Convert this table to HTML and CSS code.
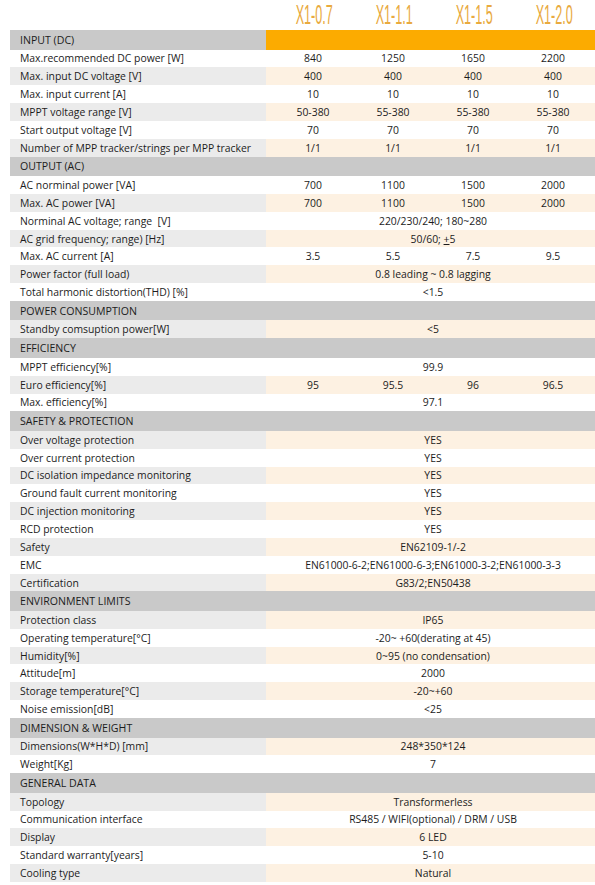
FILE: index.html
```html
<!DOCTYPE html>
<html lang="en">
<head>
    <meta charset="UTF-8">
    <meta name="viewport" content="width=device-width, initial-scale=1.0">
    <title>X1 Series Datasheet</title>
    <link rel="stylesheet" href="styles.css">
</head>
<body>

<table class="specs">
    <colgroup>
        <col class="col-label">
        <col class="col-first">
        <col class="col-mid">
        <col class="col-mid">
        <col class="col-last">
    </colgroup>
    <thead>
        <tr class="models">
            <th></th>
            <th><span>X1-0.7</span></th>
            <th><span>X1-1.1</span></th>
            <th><span>X1-1.5</span></th>
            <th><span>X1-2.0</span></th>
        </tr>
    </thead>
    <tbody>
        <tr class="section first-section"><th>INPUT (DC)</th><td colspan="4"></td></tr>
        <tr><th>Max.recommended DC power [W]</th><td>840</td><td>1250</td><td>1650</td><td>2200</td></tr>
        <tr class="alt"><th>Max. input DC voltage [V]</th><td>400</td><td>400</td><td>400</td><td>400</td></tr>
        <tr><th>Max. input current [A]</th><td>10</td><td>10</td><td>10</td><td>10</td></tr>
        <tr class="alt"><th>MPPT voltage range [V]</th><td>50-380</td><td>55-380</td><td>55-380</td><td>55-380</td></tr>
        <tr><th>Start output voltage [V]</th><td>70</td><td>70</td><td>70</td><td>70</td></tr>
        <tr class="alt"><th>Number of MPP tracker/strings per MPP tracker</th><td>1/1</td><td>1/1</td><td>1/1</td><td>1/1</td></tr>

        <tr class="section"><th>OUTPUT (AC)</th><td colspan="4"></td></tr>
        <tr><th>AC norminal power [VA]</th><td>700</td><td>1100</td><td>1500</td><td>2000</td></tr>
        <tr class="alt"><th>Max. AC power [VA]</th><td>700</td><td>1100</td><td>1500</td><td>2000</td></tr>
        <tr><th>Norminal AC voltage; range &nbsp;[V]</th><td colspan="4">220/230/240; 180~280</td></tr>
        <tr class="alt"><th>AC grid frequency; range) [Hz]</th><td colspan="4">50/60; <u>+</u>5</td></tr>
        <tr><th>Max. AC current [A]</th><td>3.5</td><td>5.5</td><td>7.5</td><td>9.5</td></tr>
        <tr class="alt"><th>Power factor (full load)</th><td colspan="4">0.8 leading ~ 0.8 lagging</td></tr>
        <tr><th>Total harmonic distortion(THD) [%]</th><td colspan="4">&lt;1.5</td></tr>

        <tr class="section"><th>POWER CONSUMPTION</th><td colspan="4"></td></tr>
        <tr class="alt"><th>Standby comsuption power[W]</th><td colspan="4">&lt;5</td></tr>

        <tr class="section"><th>EFFICIENCY</th><td colspan="4"></td></tr>
        <tr><th>MPPT efficiency[%]</th><td colspan="4">99.9</td></tr>
        <tr class="alt"><th>Euro efficiency[%]</th><td>95</td><td>95.5</td><td>96</td><td>96.5</td></tr>
        <tr><th>Max. efficiency[%]</th><td colspan="4">97.1</td></tr>

        <tr class="section"><th>SAFETY &amp; PROTECTION</th><td colspan="4"></td></tr>
        <tr class="alt"><th>Over voltage protection</th><td colspan="4">YES</td></tr>
        <tr><th>Over current protection</th><td colspan="4">YES</td></tr>
        <tr class="alt"><th>DC isolation impedance monitoring</th><td colspan="4">YES</td></tr>
        <tr><th>Ground fault current monitoring</th><td colspan="4">YES</td></tr>
        <tr class="alt"><th>DC injection monitoring</th><td colspan="4">YES</td></tr>
        <tr><th>RCD protection</th><td colspan="4">YES</td></tr>
        <tr class="alt"><th>Safety</th><td colspan="4">EN62109-1/-2</td></tr>
        <tr><th>EMC</th><td colspan="4">EN61000-6-2;EN61000-6-3;EN61000-3-2;EN61000-3-3</td></tr>
        <tr class="alt"><th>Certification</th><td colspan="4">G83/2;EN50438</td></tr>

        <tr class="section"><th>ENVIRONMENT LIMITS</th><td colspan="4"></td></tr>
        <tr class="alt"><th>Protection class</th><td colspan="4">IP65</td></tr>
        <tr><th>Operating temperature[°C]</th><td colspan="4">-20~ +60(derating at 45)</td></tr>
        <tr class="alt"><th>Humidity[%]</th><td colspan="4">0~95 (no condensation)</td></tr>
        <tr><th>Attitude[m]</th><td colspan="4">2000</td></tr>
        <tr class="alt"><th>Storage temperature[°C]</th><td colspan="4">-20~+60</td></tr>
        <tr><th>Noise emission[dB]</th><td colspan="4">&lt;25</td></tr>

        <tr class="section"><th>DIMENSION &amp; WEIGHT</th><td colspan="4"></td></tr>
        <tr class="alt"><th>Dimensions(W*H*D) [mm]</th><td colspan="4">248*350*124</td></tr>
        <tr><th>Weight[Kg]</th><td colspan="4">7</td></tr>

        <tr class="section"><th>GENERAL DATA</th><td colspan="4"></td></tr>
        <tr class="alt"><th>Topology</th><td colspan="4">Transformerless</td></tr>
        <tr><th>Communication interface</th><td colspan="4">RS485 / WIFI(optional) / DRM / USB</td></tr>
        <tr class="alt"><th>Display</th><td colspan="4">6 LED</td></tr>
        <tr><th>Standard warranty[years]</th><td colspan="4">5-10</td></tr>
        <tr class="alt"><th>Cooling type</th><td colspan="4">Natural</td></tr>
    </tbody>
</table>

</body>
</html>
```

FILE: styles.css
```css
body {
    font-family: "Open Sans", Arial, sans-serif;
    background-color: #ffffff;
    color: #1c1c1c;
    margin: 0;
    padding: 0;
}
.specs {
    width: 585px;
    margin-left: 10px;
    border-collapse: collapse;
    table-layout: fixed;
    font-size: 10.4px;
}
.col-label {
    width: 256px;
}
.col-first {
    width: 87px;
}
.col-mid {
    width: 80px;
}
.col-last {
    width: 82px;
}
.specs th, .specs td {
    padding: 0;
    white-space: nowrap;
    overflow: visible;
}
.specs tbody th {
    text-align: left;
    font-weight: normal;
    padding-left: 10px;
}
.specs tbody td {
    text-align: center;
}
.specs tbody td:nth-child(2) {
    padding-left: 7px;
}
.specs tbody td:last-child {
    padding-right: 2px;
}
.specs tbody tr {
    height: 17.85px;
}

/* model names on top */
.models {
    height: 30px;
}
.models th {
    text-align: center;
    font-weight: normal;
}
.models th:nth-child(2) {
    padding-left: 7px;
}
.models th:last-child {
    padding-right: 2px;
}
.models span {
    display: inline-block;
    font-family: "Liberation Sans", Arial, sans-serif;
    font-size: 28px;
    line-height: 30px;
    color: #e9aa3e;
    transform: scaleX(0.45);
}

/* section headers */
.specs tbody tr.section {
    height: 19.5px;
    background-color: #c9c9c9;
}
.section th {
    font-weight: 600;
    font-size: 10.6px;
    padding-left: 9px;
}
.first-section td {
    background-color: #fcab00;
}

/* shaded rows */
.alt th {
    background-color: #ebebeb;
}
.alt td {
    background-color: #fdf1e2;
}
```
